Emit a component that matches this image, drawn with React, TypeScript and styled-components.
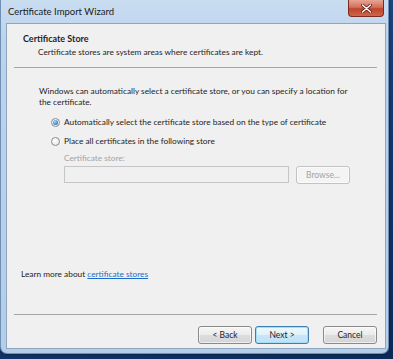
import { FC } from 'react';
import styled, { createGlobalStyle } from 'styled-components';

const GlobalStyle = createGlobalStyle`
    html, body {
        margin: 0;
        padding: 0;
    }
    body {
        font-family: Lato, "Open Sans", sans-serif;
        font-size: 8.3px;
        color: #1e1e1e;
    }
`

const Desktop = styled.div`
    width: 393px;
    height: 359px;
    overflow: hidden;
    background: linear-gradient(160deg, #2b5a94 0%, #163c72 45%, #0c2a58 100%);
`
const Frame = styled.div`
    width: 389px;
    height: 354px;
    box-sizing: border-box;
    display: flex;
    flex-direction: column;
    padding: 0 2px 4px 5px;
    background: linear-gradient(180deg, #c9ddf1 0%, #bcd3ec 12%, #b4cde8 100%);
    border: 1px solid #6f8fb4;
    border-top: none;
    border-radius: 0 0 7px 7px;
    box-shadow: 0 0 3px rgba(0, 0, 0, 0.5);
`
const TitleBar = styled.div`
    height: 23px;
    display: flex;
    align-items: flex-start;
    justify-content: space-between;
`
const Title = styled.span`
    padding: 6px 0 0 2px;
    font-size: 9.5px;
    line-height: 12px;
    color: #1b1b1b;
`
const CloseButton = styled.div`
    width: 34px;
    height: 16px;
    margin-right: 2px;
    display: flex;
    align-items: center;
    justify-content: center;
    border: 1px solid #7a2a20;
    border-top: none;
    border-radius: 0 0 4px 4px;
    background: linear-gradient(180deg, #e8a493 0%, #d3705a 45%, #c0432a 55%, #d0654a 100%);
`
const Client = styled.div`
    flex: 1;
    display: flex;
    flex-direction: column;
    background: #f0f0f0;
    border: 1px solid #8fa6c0;
`
const Header = styled.div`
    padding: 8px 0 0 16px;
    height: 43px;
    box-sizing: border-box;
`
const HeaderTitle = styled.div`
    font-weight: 700;
    font-size: 9px;
    line-height: 13px;
`
const HeaderText = styled.div`
    padding-left: 15px;
    line-height: 15px;
`
const Separator = styled.hr`
    margin: 0 8px 0 7px;
    border: none;
    border-top: 1px solid #a6a6a6;
`
const Body = styled.div`
    flex: 1;
    display: flex;
    flex-direction: column;
    padding: 18px 30px 0 32px;
`
const Paragraph = styled.p`
    margin: 0;
    line-height: 11px;
`
const Options = styled.div`
    display: flex;
    flex-direction: column;
    gap: 7px;
    padding: 8px 0 0 12px;
`
const Option = styled.label`
    display: flex;
    align-items: center;
    gap: 4px;
    line-height: 12px;
`
const Radio = styled.span<{checked?: boolean}>`
    width: 9px;
    height: 9px;
    box-sizing: border-box;
    border-radius: 50%;
    border: 1px solid #8c8c8c;
    display: flex;
    align-items: center;
    justify-content: center;
    background: radial-gradient(circle at 40% 35%, #ffffff 0%, #e2e2e2 100%);
    &::after {
        content: '';
        display: ${props => props.checked ? 'block' : 'none'};
        width: 5px;
        height: 5px;
        border-radius: 50%;
        background: radial-gradient(circle at 40% 35%, #a9d6f5 0%, #2a7fc5 70%, #1a5a9c 100%);
    }
`
const StoreBlock = styled.div`
    padding: 5px 0 0 25px;
    display: flex;
    flex-direction: column;
    gap: 2px;
`
const DisabledLabel = styled.span`
    color: #a3a3a3;
    line-height: 12px;
`
const StoreRow = styled.div`
    display: flex;
    gap: 7px;
`
const StoreInput = styled.div`
    width: 225px;
    height: 17px;
    box-sizing: border-box;
    border: 1px solid #c6c6c6;
    background: #f0f0f0;
`
const Button = styled.button<{variant?: 'default' | 'disabled'}>`
    height: 18px;
    width: 54px;
    padding: 0;
    box-sizing: border-box;
    font-family: inherit;
    font-size: 8.5px;
    line-height: 14px;
    border-radius: 3px;
    border: 1px solid ${props => props.variant === 'default' ? '#3c7fb1' : props.variant === 'disabled' ? '#c2c2c2' : '#8a8a8a'};
    color: ${props => props.variant === 'disabled' ? '#a3a3a3' : '#1e1e1e'};
    background: ${props => props.variant === 'default'
        ? 'linear-gradient(180deg, #eef8fe 0%, #dff1fc 50%, #c8e6fa 51%, #bfe1f8 100%)'
        : props.variant === 'disabled'
            ? '#f4f4f4'
            : 'linear-gradient(180deg, #f6f6f6 0%, #ebebeb 50%, #dddddd 51%, #d4d4d4 100%)'};
    box-shadow: ${props => props.variant === 'default' ? 'inset 0 0 0 1px #a8dcf6' : 'inset 0 0 0 1px rgba(255,255,255,0.6)'};
`
const LearnMore = styled.div`
    margin-top: auto;
    padding: 0 0 34px 14px;
    line-height: 12px;
`
const Link = styled.a`
    color: #1a6fcd;
    text-decoration: underline;
`
const Footer = styled.div`
    height: 33px;
    box-sizing: border-box;
    display: flex;
    justify-content: flex-end;
    align-items: flex-start;
    gap: 3px;
    padding: 11px 8px 0 0;
`
const Spacer = styled.span`
    width: 8px;
`

const App: FC = () => {
    return (
        <Desktop>
            <GlobalStyle/>
            <Frame>
                <TitleBar>
                    <Title>Certificate Import Wizard</Title>
                    <CloseButton>
                        <svg width="11" height="9" viewBox="0 0 11 9">
                            <path d="M1.5 1 L9.5 8 M9.5 1 L1.5 8" stroke="#5a1a10" strokeWidth="3" strokeLinecap="round"/>
                            <path d="M1.5 1 L9.5 8 M9.5 1 L1.5 8" stroke="#ffffff" strokeWidth="1.6" strokeLinecap="round"/>
                        </svg>
                    </CloseButton>
                </TitleBar>
                <Client>
                    <Header>
                        <HeaderTitle>Certificate Store</HeaderTitle>
                        <HeaderText>Certificate stores are system areas where certificates are kept.</HeaderText>
                    </Header>
                    <Separator/>
                    <Body>
                        <Paragraph>
                            Windows can automatically select a certificate store, or you can specify a location for the certificate.
                        </Paragraph>
                        <Options>
                            <Option><Radio checked/>Automatically select the certificate store based on the type of certificate</Option>
                            <Option><Radio/>Place all certificates in the following store</Option>
                        </Options>
                        <StoreBlock>
                            <DisabledLabel>Certificate store:</DisabledLabel>
                            <StoreRow>
                                <StoreInput/>
                                <Button variant="disabled">Browse...</Button>
                            </StoreRow>
                        </StoreBlock>
                    </Body>
                    <LearnMore>
                        Learn more about <Link href="#">certificate stores</Link>
                    </LearnMore>
                    <Separator/>
                    <Footer>
                        <Button>&lt; Back</Button>
                        <Button variant="default">Next &gt;</Button>
                        <Spacer/>
                        <Button>Cancel</Button>
                    </Footer>
                </Client>
            </Frame>
        </Desktop>
    )
}

export default App;
